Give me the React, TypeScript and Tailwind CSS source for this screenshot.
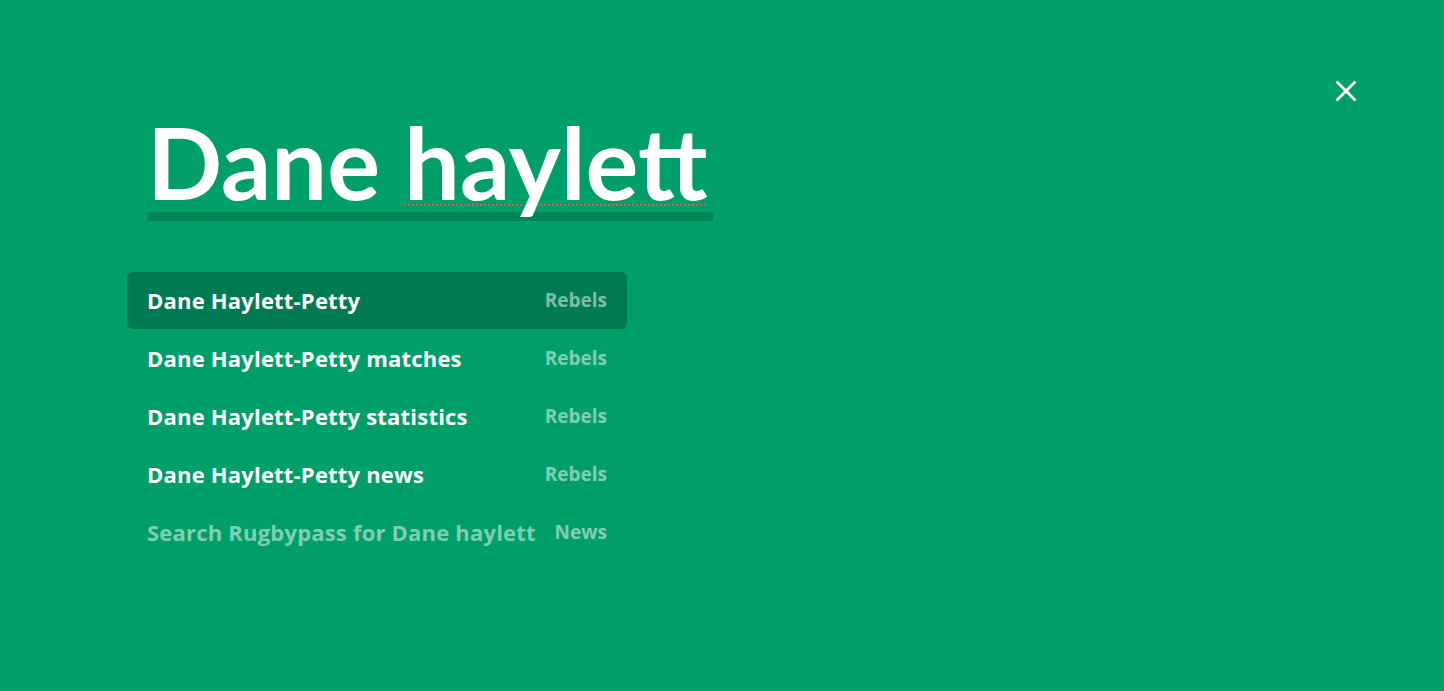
const rows = [
  { label: 'Dane Haylett-Petty', tag: 'Rebels', active: true },
  { label: 'Dane Haylett-Petty matches', tag: 'Rebels' },
  { label: 'Dane Haylett-Petty statistics', tag: 'Rebels' },
  { label: 'Dane Haylett-Petty news', tag: 'Rebels' },
  { label: 'Search Rugbypass for Dane haylett', tag: 'News', muted: true },
];

export default function App() {
  return (
    <div className="relative h-[691px] w-full overflow-hidden bg-[#009e68] font-['Lato','Noto_Sans',sans-serif] text-white">
      <button className="absolute right-[86px] top-[79px] flex h-6 w-6 items-center justify-center">
        <svg viewBox="0 0 24 24" className="h-6 w-6" fill="none" stroke="white" strokeWidth={2.8} strokeLinecap="square">
          <path d="M3.5 3.5l17 17M20.5 3.5l-17 17" />
        </svg>
      </button>

      <div className="pl-[127px] pt-[112px]">
        <div className="ml-[20px] w-[566px]">
          <div className="text-[99px] font-bold leading-[100px]">
            Dane{' '}
            <span className="underline decoration-dotted decoration-[#e2584a] decoration-[1.5px] underline-offset-[4px]">haylett</span>
          </div>
          <div className="mt-0 h-[9px] w-full bg-[#00855a]" />
        </div>

        <div className="mt-[51px] flex w-[500px] flex-col gap-[1px] font-['Open_Sans','Noto_Sans',sans-serif]">
          {rows.map((r) => (
            <div
              key={r.label}
              className={`flex h-[57px] items-center justify-between rounded-md px-5 ${r.active ? 'bg-[#007a52]' : ''}`}
            >
              <span className={`text-[22px] font-bold tracking-[0.2px] ${r.muted ? 'text-white/50' : 'text-white'}`}>{r.label}</span>
              <span className="text-[19px] font-bold text-white/50">{r.tag}</span>
            </div>
          ))}
        </div>
      </div>
    </div>
  );
}
